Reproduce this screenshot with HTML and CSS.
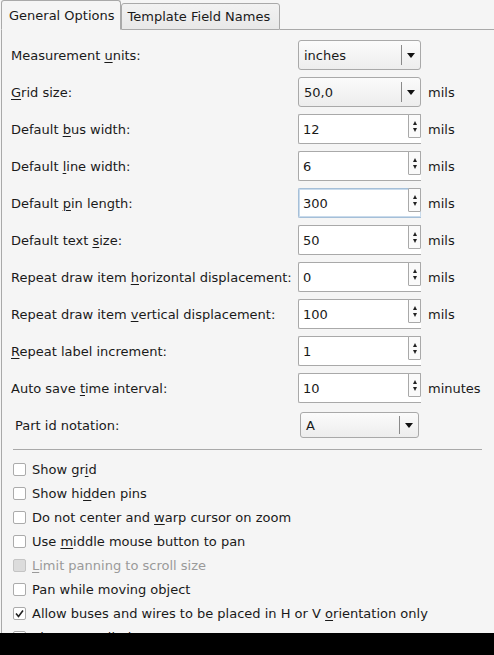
FILE: index.html
```html
<!DOCTYPE html>
<html>
<head>
<meta charset="utf-8">
<link rel="stylesheet" href="styles.css">
</head>
<body>
<div class="win">
  <div class="tabbar">
    <div class="tab active">General Options</div>
    <div class="tab">Template Field Names</div>
    <div class="tabfill"></div>
  </div>
  <div class="panel">
    <div class="form">
      <div class="lbl">Measurement <u>u</u>nits:</div>
      <div class="combo"><span class="val">inches</span><span class="sep"></span><span class="arrow"></span></div>
      <div class="unit"></div>

      <div class="lbl"><u>G</u>rid size:</div>
      <div class="combo"><span class="val">50,0</span><span class="sep"></span><span class="arrow"></span></div>
      <div class="unit">mils</div>

      <div class="lbl">Default <u>b</u>us width:</div>
      <div class="spin"><span class="val">12</span><span class="btns"><span class="up"></span><span class="dn"></span></span></div>
      <div class="unit">mils</div>

      <div class="lbl">Default <u>l</u>ine width:</div>
      <div class="spin"><span class="val">6</span><span class="btns"><span class="up"></span><span class="dn"></span></span></div>
      <div class="unit">mils</div>

      <div class="lbl">Default <u>p</u>in length:</div>
      <div class="spin focus"><span class="val">300</span><span class="btns"><span class="up"></span><span class="dn"></span></span></div>
      <div class="unit">mils</div>

      <div class="lbl">Default text <u>s</u>ize:</div>
      <div class="spin"><span class="val">50</span><span class="btns"><span class="up"></span><span class="dn"></span></span></div>
      <div class="unit">mils</div>

      <div class="lbl">Repeat draw item <u>h</u>orizontal displacement:</div>
      <div class="spin"><span class="val">0</span><span class="btns"><span class="up"></span><span class="dn"></span></span></div>
      <div class="unit">mils</div>

      <div class="lbl">Repeat draw item <u>v</u>ertical displacement:</div>
      <div class="spin"><span class="val">100</span><span class="btns"><span class="up"></span><span class="dn"></span></span></div>
      <div class="unit">mils</div>

      <div class="lbl"><u>R</u>epeat label increment:</div>
      <div class="spin"><span class="val">1</span><span class="btns"><span class="up"></span><span class="dn"></span></span></div>
      <div class="unit"></div>

      <div class="lbl">Auto save <u>t</u>ime interval:</div>
      <div class="spin"><span class="val">10</span><span class="btns"><span class="up"></span><span class="dn"></span></span></div>
      <div class="unit">minutes</div>
    </div>

    <div class="partrow">
      <div class="lbl">Part id notation:</div>
      <div class="combo small"><span class="val">A</span><span class="sep"></span><span class="arrow"></span></div>
    </div>

    <div class="hsep"></div>

    <div class="checks">
      <div class="chk"><span class="box"></span><span>Show gr<u>i</u>d</span></div>
      <div class="chk"><span class="box"></span><span>Show hi<u>d</u>den pins</span></div>
      <div class="chk"><span class="box"></span><span>Do not center and <u>w</u>arp cursor on zoom</span></div>
      <div class="chk"><span class="box"></span><span>Use <u>m</u>iddle mouse button to pan</span></div>
      <div class="chk disabled"><span class="box"></span><span><u>L</u>imit panning to scroll size</span></div>
      <div class="chk"><span class="box"></span><span>Pan while moving object</span></div>
      <div class="chk"><span class="box checked"><svg width="11" height="11" viewBox="0 0 11 11"><polyline points="2,5.5 4.5,8.5 9,2.5" fill="none" stroke="#222" stroke-width="1.6"/></svg></span><span>Allow buses and wires to be placed in H or V <u>o</u>rientation only</span></div>
      <div class="chk"><span class="box"></span><span>Show page limits</span></div>
    </div>
  </div>
  <div class="blackbar"></div>
</div>
</body>
</html>
```
FILE: styles.css
```css
html, body {
  margin: 0;
  padding: 0;
  background: #f5f5f5;
  width: 494px;
  height: 655px;
  overflow: hidden;
}
body {
  font-family: "DejaVu Sans", sans-serif;
  font-size: 13px;
  color: #1a1a1a;
}
u { text-decoration: underline; text-underline-offset: 2px; }
.win {
  position: relative;
  width: 494px;
  height: 655px;
  overflow: hidden;
}
.tabbar {
  display: flex;
  align-items: flex-end;
  height: 30px;
  padding-left: 1px;
}
.tab {
  box-sizing: border-box;
  height: 27px;
  padding: 0 9px 0 6px;
  border: 1px solid #a9a9a9;
  border-radius: 3px 3px 0 0;
  background: linear-gradient(#f2f2f2, #e8e8e8);
  line-height: 25px;
}
.tab.active {
  position: relative;
  z-index: 1;
  height: 30px;
  padding: 0 5px 0 7px;
  background: #f5f5f5;
  border-bottom: 1px solid #f5f5f5;
  line-height: 30px;
}
.tabfill {
  flex: 1;
  border-bottom: 1px solid #a9a9a9;
  height: 0;
}
.panel {
  margin-top: -1px;
  margin-left: 1px;
  border-left: 1px solid #a9a9a9;
  padding-top: 11px;
}
.form {
  display: grid;
  grid-template-columns: 287px 123px auto;
  grid-auto-rows: 30px;
  row-gap: 7px;
  padding-left: 9px;
  align-items: center;
}
.lbl { white-space: nowrap; }
.unit { padding-left: 7px; }
.combo {
  box-sizing: border-box;
  height: 30px;
  border: 1px solid #a9a9a9;
  border-radius: 3px;
  background: linear-gradient(#fbfbfb, #ededed);
  display: flex;
  align-items: center;
  padding-left: 5px;
}
.combo .val { flex: 1; }
.combo .sep {
  width: 1px;
  height: 20px;
  background: #8a8a8a;
}
.combo .arrow {
  width: 0;
  height: 0;
  border-left: 4px solid transparent;
  border-right: 4px solid transparent;
  border-top: 5px solid #111;
  margin: 0 5px 0 5px;
}
.combo.small {
  height: 26px;
  width: 119px;
  padding-left: 5px;
}
.combo.small .sep { height: 18px; }
.spin {
  box-sizing: border-box;
  height: 30px;
  border: 1px solid #a9a9a9;
  border-right: none;
  border-radius: 2px 0 0 2px;
  background: #fff;
  display: flex;
  align-items: center;
  padding-left: 4px;
  position: relative;
}
.spin.focus {
  border-color: #a5bfd8;
  box-shadow: inset 0 0 0 1px #c9dbec;
}
.spin .val { flex: 1; }
.spin .btns {
  position: absolute;
  right: 0;
  top: -1px;
  box-sizing: border-box;
  width: 13px;
  height: 24px;
  border: 1px solid #a9a9a9;
  border-radius: 1px;
  background: #fafafa;
  display: flex;
  flex-direction: column;
  align-items: center;
  justify-content: center;
  gap: 3px;
}
.spin .up {
  width: 0; height: 0;
  border-left: 2.5px solid transparent;
  border-right: 2.5px solid transparent;
  border-bottom: 4px solid #222;
}
.spin .dn {
  width: 0; height: 0;
  border-left: 2.5px solid transparent;
  border-right: 2.5px solid transparent;
  border-top: 4px solid #222;
}
.partrow {
  display: flex;
  align-items: center;
  height: 26px;
  margin-top: 9px;
  padding-left: 13px;
}
.partrow .lbl { width: 285px; }
.hsep {
  height: 1px;
  background: #a9a9a9;
  margin: 11px 12px 0 11px;
}
.checks {
  margin-top: 7px;
  padding-left: 11px;
}
.chk {
  height: 24px;
  display: flex;
  align-items: center;
  gap: 6px;
}
.box {
  box-sizing: border-box;
  width: 13px;
  height: 13px;
  border: 1px solid #ababab;
  border-radius: 2px;
  background: #fff;
  display: flex;
  align-items: center;
  justify-content: center;
}
.chk.disabled { color: #9a9a9a; }
.chk.disabled .box { background: #dcdcdc; border-color: #c4c4c4; }
.blackbar {
  position: absolute;
  left: 0;
  right: 0;
  top: 633px;
  bottom: 0;
  background: #000;
}
```
